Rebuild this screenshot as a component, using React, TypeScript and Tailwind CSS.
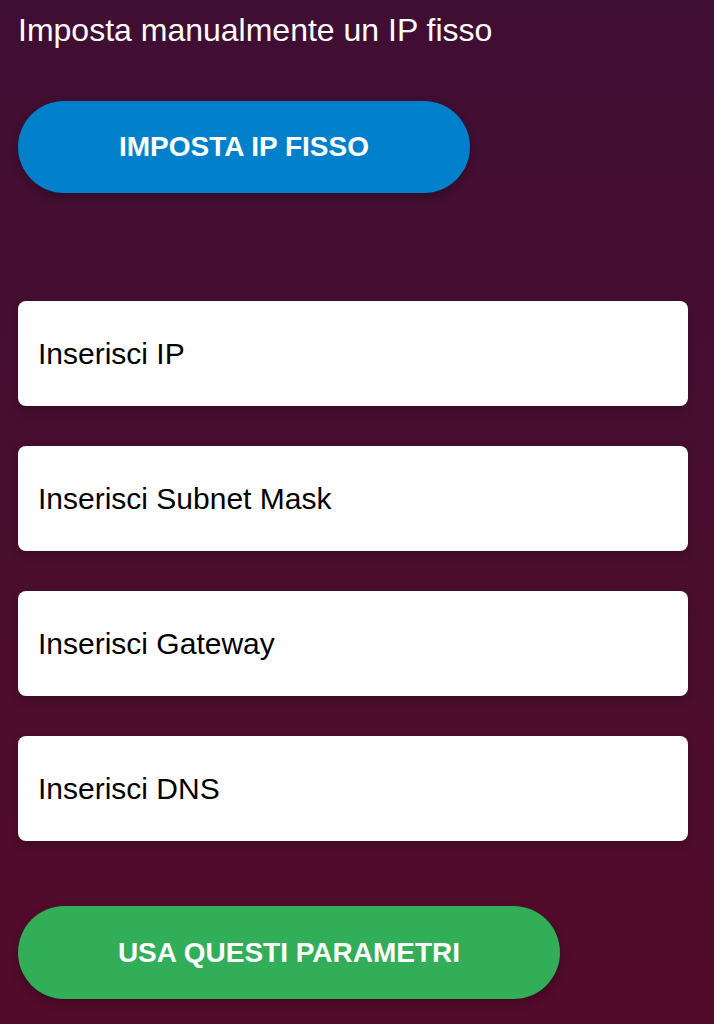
const fields = [
    "Inserisci IP",
    "Inserisci Subnet Mask",
    "Inserisci Gateway",
    "Inserisci DNS",
];

export default function App() {
    return (
        <div className="min-h-screen bg-gradient-to-b from-[#3f0e33] to-[#530b2a] pl-[18px] pr-[26px] pt-[10px] font-['Liberation_Sans',Arial,sans-serif]">
            <h1 className="text-[32px] leading-[40px] text-white">
                Imposta manualmente un IP fisso
            </h1>

            <button className="mt-[51px] flex h-[92px] w-[452px] items-center justify-center rounded-full bg-[#0080cb] text-[28px] font-bold uppercase text-white shadow-[0_4px_10px_rgba(0,0,0,0.25)]">
                Imposta IP fisso
            </button>

            <div className="mt-[108px] flex flex-col gap-[40px]">
                {fields.map((f) => (
                    <input
                        key={f}
                        placeholder={f}
                        className="h-[105px] w-full rounded-lg bg-white px-[20px] text-[30px] text-black shadow-[0_4px_10px_rgba(0,0,0,0.2)] outline-none placeholder:text-black"
                    />
                ))}
            </div>

            <button className="mt-[65px] flex h-[93px] w-[542px] items-center justify-center rounded-full bg-[#32ad58] text-[28px] font-bold uppercase text-white shadow-[0_4px_10px_rgba(0,0,0,0.25)]">
                Usa questi parametri
            </button>
        </div>
    );
}
